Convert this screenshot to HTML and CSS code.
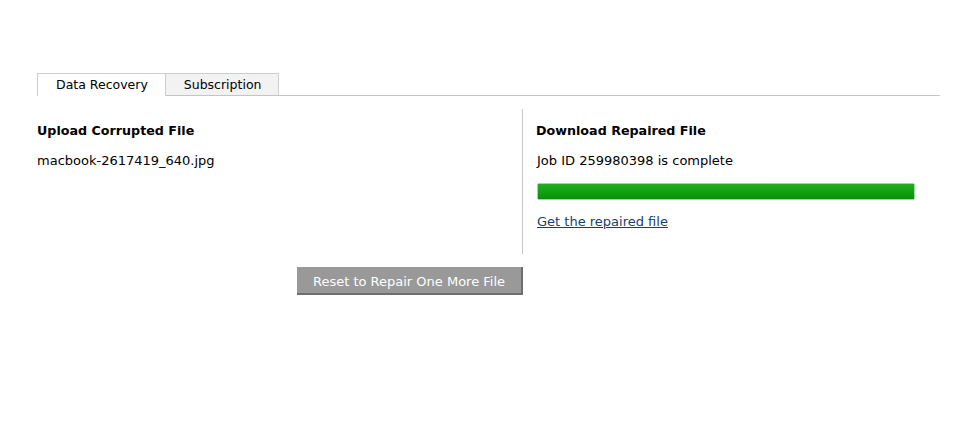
FILE: index.html
```html
<!DOCTYPE html>
<html>
<head>
    <title>Data Recovery</title>
    <link rel="stylesheet" href="styles.css">
</head>
<body>

    <div class="wrap">
        <div class="tabs">
            <div class="tab active">Data Recovery</div>
            <div class="tab">Subscription</div>
        </div>

        <div class="panel">
            <div class="col">
                <h3>Upload Corrupted File</h3>
                <p>macbook-2617419_640.jpg</p>
            </div>
            <div class="col right">
                <h3>Download Repaired File</h3>
                <p>Job ID 259980398 is complete</p>
                <div class="progress"><div class="bar" style="width: 100%"></div></div>
                <a href="#" class="get-link">Get the repaired file</a>
            </div>
        </div>

        <button class="reset-button">Reset to Repair One More File</button>
    </div>

</body>
</html>
```

FILE: styles.css
```css
body {
    font-family: "DejaVu Sans", Verdana, sans-serif;
    font-size: 13px;
    color: #000;
    margin: 0;
    background: #fff;
}

.wrap {
    padding: 73px 38px 0 37px;
}

.tabs {
    display: flex;
    border-bottom: 1px solid #c4c4c4;
}

.tab {
    height: 21px;
    line-height: 21px;
    padding: 0 17px 0 18px;
    border: 1px solid #cfcfcf;
    border-bottom: none;
    background: #f2f2f2;
    font-size: 12.5px;
}

.tab + .tab {
    border-left: none;
}

.tab.active {
    background: #fff;
    margin-bottom: -1px;
    height: 22px;
}

.panel {
    display: grid;
    grid-template-columns: 485px 1fr;
    margin-top: 13px;
}

.col {
    min-height: 145px;
}

.col.right {
    border-left: 1px solid #c8c8c8;
    padding-left: 13px;
    padding-right: 25px;
}

h3 {
    font-size: 12.7px;
    font-weight: bold;
    margin: 14px 0 0;
    line-height: 16px;
}

p {
    margin: 14px 0 0;
    line-height: 16px;
}

.col.right p,
.col.right .progress,
.col.right .get-link {
    margin-left: 1px;
}

.progress {
    margin-top: 14px;
    height: 15px;
    border: 1px solid #9ed89e;
    border-radius: 2px;
    background: #fff;
}

.bar {
    height: 100%;
    background: linear-gradient(#22ad22, #079307);
}

.get-link {
    display: inline-block;
    margin-top: 14px;
    color: #163f6b;
    line-height: 16px;
}

.reset-button {
    display: block;
    margin: 13px 0 0 260px;
    width: 226px;
    height: 28px;
    background: #999;
    color: #fff;
    border: none;
    border-right: 2px solid #6f6f6f;
    border-bottom: 2px solid #6f6f6f;
    font-family: "DejaVu Sans", Verdana, sans-serif;
    font-size: 13px;
    padding: 2px 0 0;
    cursor: pointer;
}
```
